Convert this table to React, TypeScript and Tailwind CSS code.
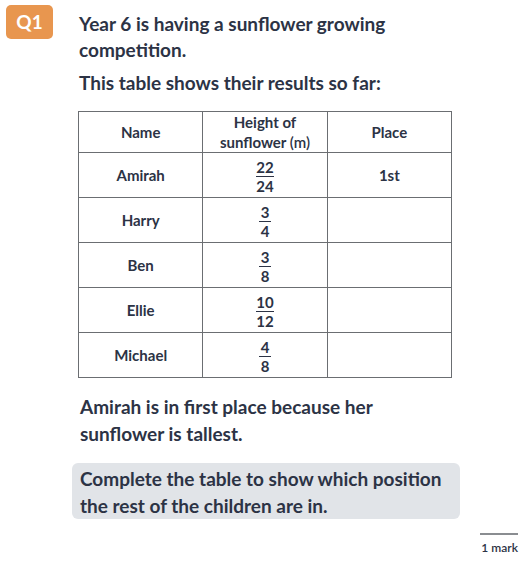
import React from 'react';

type Row = { name: string; num: string; den: string; place: string };

const rows: Row[] = [
    { name: 'Amirah', num: '22', den: '24', place: '1st' },
    { name: 'Harry', num: '3', den: '4', place: '' },
    { name: 'Ben', num: '3', den: '8', place: '' },
    { name: 'Ellie', num: '10', den: '12', place: '' },
    { name: 'Michael', num: '4', den: '8', place: '' },
];

const Fraction: React.FC<{ num: string; den: string }> = ({ num, den }) => (
    <div className="inline-flex flex-col items-center leading-[16px] text-[15px]">
        <span>{num}</span>
        <span className="h-[1.5px] w-full min-w-[12px] bg-[#2c3345] my-[1px]"></span>
        <span>{den}</span>
    </div>
);

const cell = 'border-[1.5px] border-[#6b6e72] text-center align-middle';

const App: React.FC = () => {
    return (
        <div className="w-[526px] h-[565px] bg-white text-[#2c3345] font-['Lato','Liberation_Sans',sans-serif] font-bold relative">
            <div className="flex pt-[5px]">
                <div className="ml-[6px] w-[47px] h-[34px] rounded-[5px] bg-[#e8964f] text-white font-bold text-[19px] flex items-center justify-center">
                    Q1
                </div>
                <div className="ml-[26px] flex-1 pt-[6px]">
                    <p className="text-[19px] leading-[26px]">
                        Year 6 is having a sunflower growing
                        <br />
                        competition.
                    </p>
                    <p className="text-[19px] leading-[26px] mt-[7px]">This table shows their results so far:</p>
                </div>
            </div>

            <table className="ml-[78px] mt-[15px] w-[374px] border-collapse table-fixed text-[15px]">
                <tbody>
                    <tr className="h-[40px]">
                        <td className={cell}>Name</td>
                        <td className={`${cell} leading-[20px]`}>
                            Height of
                            <br />
                            sunflower <span className="font-semibold">(m)</span>
                        </td>
                        <td className={cell}>Place</td>
                    </tr>
                    {rows.map((r) => (
                        <tr key={r.name} className="h-[45px]">
                            <td className={cell}>{r.name}</td>
                            <td className={cell}>
                                <Fraction num={r.num} den={r.den} />
                            </td>
                            <td className={cell}>{r.place}</td>
                        </tr>
                    ))}
                </tbody>
            </table>

            <p className="ml-[80px] mt-[15px] text-[19px] leading-[27px]">
                Amirah is in first place because her
                <br />
                sunflower is tallest.
            </p>

            <div className="ml-[72px] mt-[16px] w-[388px] h-[56px] rounded-[6px] bg-[#e1e4e8] px-[8px] pt-[2px] text-[19px] leading-[27px]">
                Complete the table to show which position
                <br />
                the rest of the children are in.
            </div>

            <div className="flex justify-end pr-[8px] mt-[14px]">
                <div className="w-[38px] border-t-[2px] border-[#8a8d91] pt-[4px] text-[12px] font-semibold text-right whitespace-nowrap">
                    1 mark
                </div>
            </div>
        </div>
    );
};

export default App;
